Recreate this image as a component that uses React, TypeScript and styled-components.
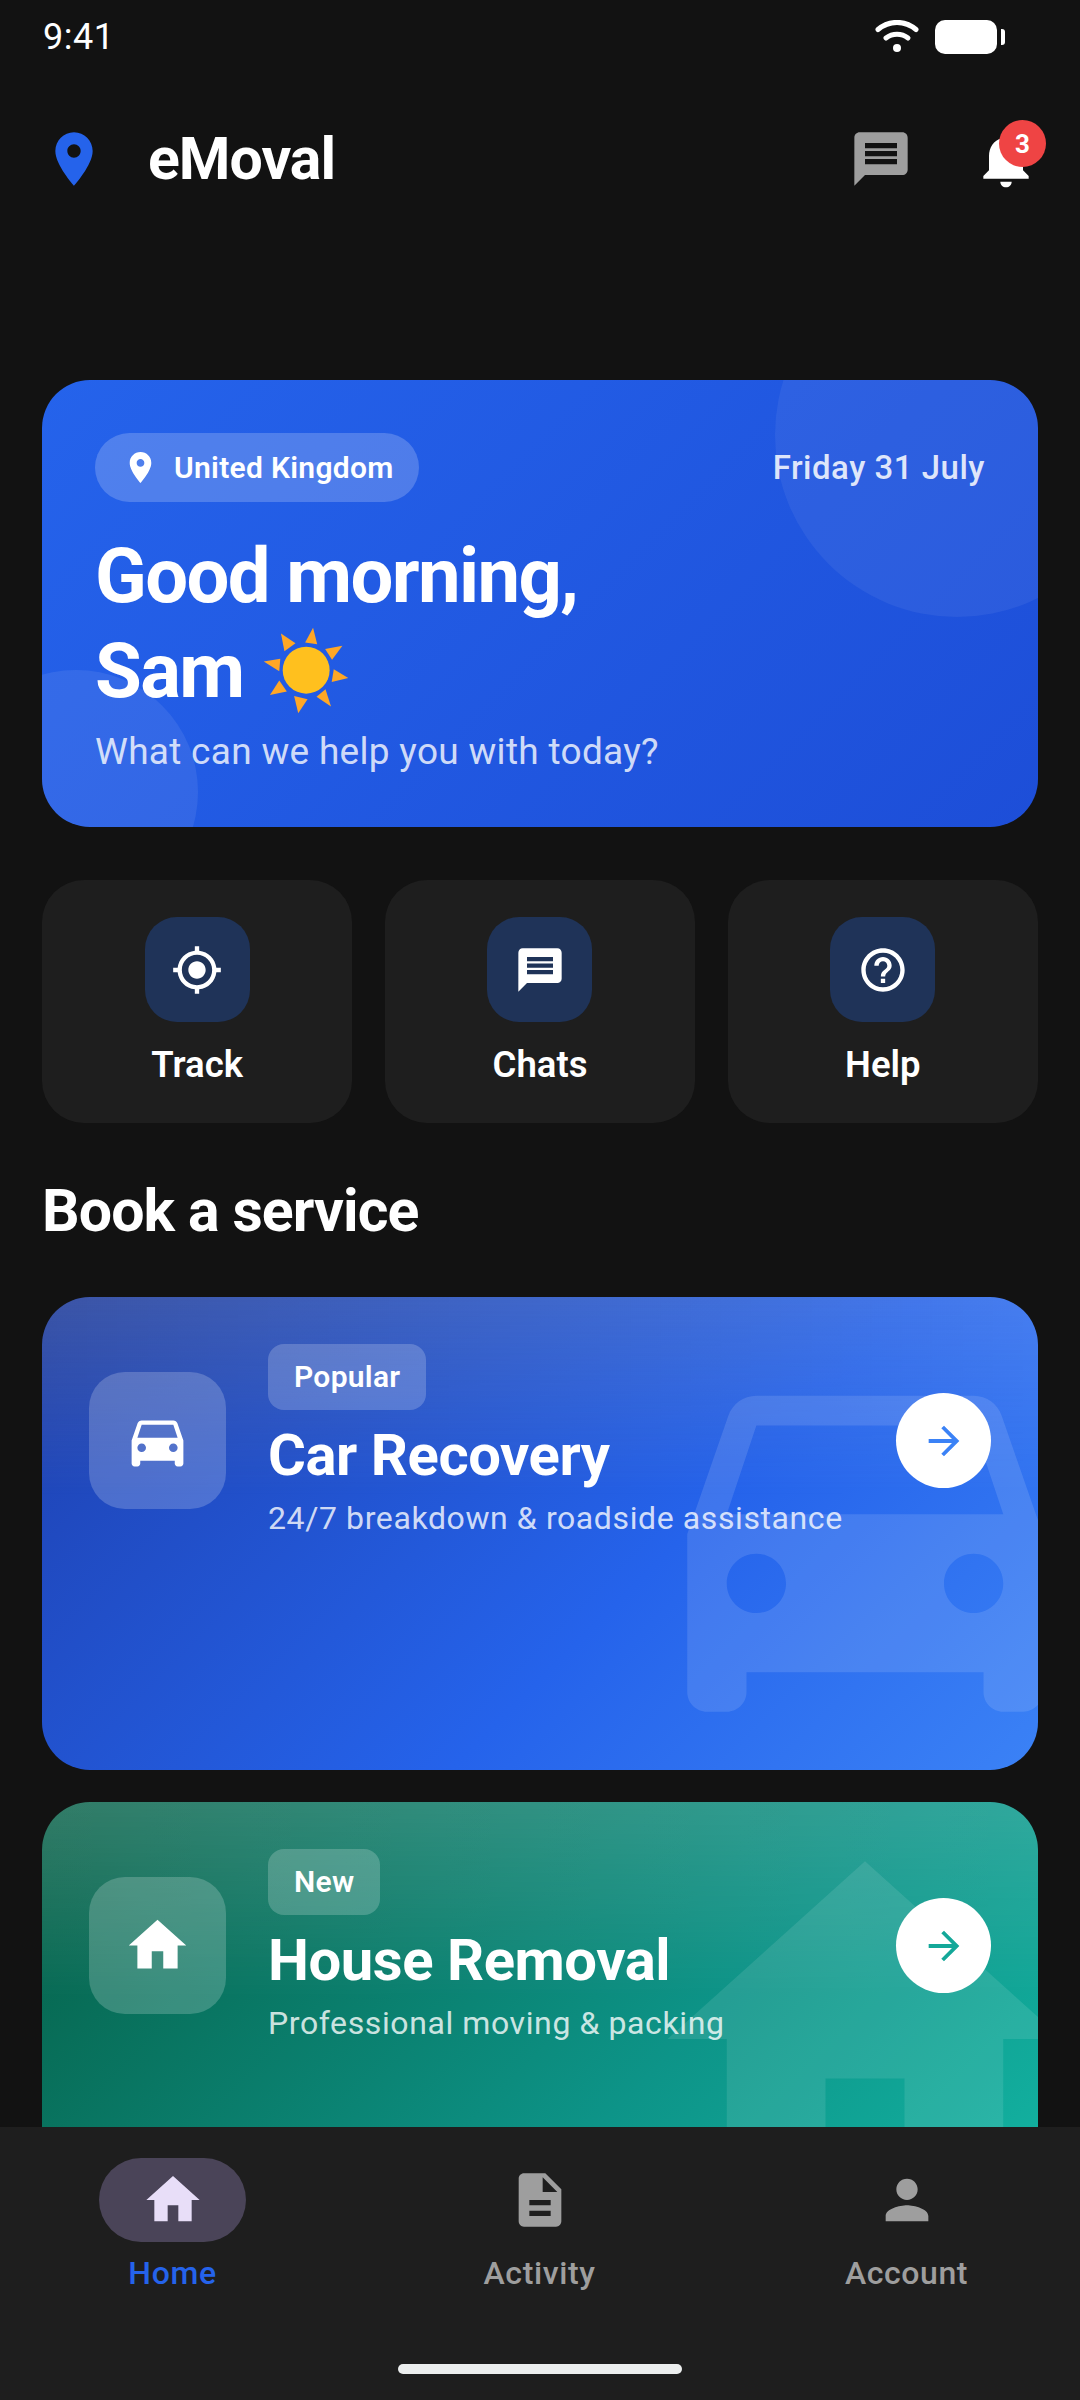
import styled, { createGlobalStyle } from 'styled-components';

const ICONS = {
  pin: 'M12 2C8.13 2 5 5.13 5 9c0 5.25 7 13 7 13s7-7.75 7-13c0-3.87-3.13-7-7-7zm0 9.5c-1.38 0-2.5-1.12-2.5-2.5s1.12-2.5 2.5-2.5 2.5 1.12 2.5 2.5-1.12 2.5-2.5 2.5z',
  message:
    'M20 2H4c-1.1 0-1.99.9-1.99 2L2 22l4-4h14c1.1 0 2-.9 2-2V4c0-1.1-.9-2-2-2zm-2 12H6v-2h12v2zm0-3H6V9h12v2zm0-3H6V6h12v2z',
  bell: 'M12 22c1.1 0 2-.9 2-2h-4c0 1.1.89 2 2 2zm6-6v-5c0-3.07-1.64-5.64-4.5-6.32V4c0-.83-.67-1.5-1.5-1.5s-1.5.67-1.5 1.5v.68C7.63 5.36 6 7.92 6 11v5l-2 2v1h16v-1l-2-2z',
  gps: 'M12 8c-2.21 0-4 1.79-4 4s1.79 4 4 4 4-1.79 4-4-1.79-4-4-4zm8.94 3c-.46-4.17-3.77-7.48-7.94-7.94V1h-2v2.06C6.83 3.52 3.52 6.83 3.06 11H1v2h2.06c.46 4.17 3.77 7.48 7.94 7.94V23h2v-2.06c4.17-.46 7.48-3.77 7.94-7.94H23v-2h-2.06zM12 19c-3.87 0-7-3.13-7-7s3.13-7 7-7 7 3.13 7 7-3.13 7-7 7z',
  help: 'M11 18h2v-2h-2v2zm1-16C6.48 2 2 6.48 2 12s4.48 10 10 10 10-4.48 10-10S17.52 2 12 2zm0 18c-4.41 0-8-3.59-8-8s3.59-8 8-8 8 3.59 8 8-3.59 8-8 8zm0-14c-2.21 0-4 1.79-4 4h2c0-1.1.9-2 2-2s2 .9 2 2c0 2-3 1.75-3 5h2c0-2.25 3-2.5 3-5 0-2.21-1.79-4-4-4z',
  car: 'M18.92 6.01C18.72 5.42 18.16 5 17.5 5h-11c-.66 0-1.21.42-1.42 1.01L3 12v8c0 .55.45 1 1 1h1c.55 0 1-.45 1-1v-1h12v1c0 .55.45 1 1 1h1c.55 0 1-.45 1-1v-8l-2.08-5.99zM6.5 16c-.83 0-1.5-.67-1.5-1.5S5.67 13 6.5 13s1.5.67 1.5 1.5S7.33 16 6.5 16zm11 0c-.83 0-1.5-.67-1.5-1.5s.67-1.5 1.5-1.5 1.5.67 1.5 1.5-.67 1.5-1.5 1.5zM5 11l1.5-4.5h11L19 11H5z',
  home: 'M10 20v-6h4v6h5v-8h3L12 3 2 12h3v8z',
  arrow: 'M12 4l-1.41 1.41L16.17 11H4v2h12.17l-5.58 5.59L12 20l8-8z',
  file: 'M14 2H6c-1.1 0-1.99.9-1.99 2L4 20c0 1.1.89 2 1.99 2H18c1.1 0 2-.9 2-2V8l-6-6zm2 16H8v-2h8v2zm0-4H8v-2h8v2zm-3-5V3.5L18.5 9H13z',
  person:
    'M12 12c2.21 0 4-1.79 4-4s-1.79-4-4-4-4 1.79-4 4 1.79 4 4 4zm0 2c-2.67 0-8 1.34-8 4v2h16v-2c0-2.66-5.33-4-8-4z',
};

type IconName = keyof typeof ICONS;

const SUN_RAYS = [
  '248,90 225,133 260,138',
  '333,142 283,152 303,183',
  '350,236 308,210 302,247',
  '300,318 284,268 258,290',
  '205,338 232,297 193,288',
  '123,285 172,275 150,243',
  '105,188 153,180 150,216',
  '155,107 165,158 197,135',
];

const Icon = ({ name, size, color }: { name: IconName; size: number; color: string }) => (
  <svg width={size} height={size} viewBox="0 0 24 24" fill={color} style={{ display: 'block', flex: 'none' }}>
    <path d={ICONS[name]} />
  </svg>
);

const GlobalStyle = createGlobalStyle`
  html, body {
    margin: 0;
    padding: 0;
    background: #121212;
  }
  * {
    box-sizing: border-box;
  }
`;

const Screen = styled.div`
  width: 1080px;
  height: 2400px;
  display: flex;
  flex-direction: column;
  overflow: hidden;
  background: #121212;
  color: #fff;
  font-family: Roboto, 'Liberation Sans', sans-serif;
`;

const StatusBar = styled.div`
  height: 70px;
  flex: none;
  display: flex;
  align-items: center;
  justify-content: space-between;
  padding: 4px 75px 0 43px;
`;

const Clock = styled.span`
  font-size: 36px;
  line-height: 66px;
  letter-spacing: 0.5px;
`;

const StatusIcons = styled.div`
  display: flex;
  align-items: center;
  gap: 16px;
`;

const Battery = styled.div`
  width: 70px;
  height: 34px;
  position: relative;
  &::before {
    content: '';
    position: absolute;
    left: 0;
    top: 0;
    width: 62px;
    height: 34px;
    border-radius: 10px;
    background: #fff;
  }
  &::after {
    content: '';
    position: absolute;
    right: 0;
    top: 9px;
    width: 4px;
    height: 16px;
    border-radius: 0 3px 3px 0;
    background: #fff;
  }
`;

const Header = styled.header`
  height: 178px;
  flex: none;
  display: flex;
  align-items: center;
  padding: 0 42px;
`;

const Brand = styled.h1`
  margin: 0 0 0 42px;
  font-size: 59px;
  font-weight: 700;
  line-height: 64px;
  letter-spacing: -1px;
  flex: 1;
`;

const HeaderButton = styled.div`
  width: 64px;
  height: 64px;
  position: relative;
  margin-left: 61px;
  display: flex;
  align-items: center;
  justify-content: center;
`;

const Badge = styled.span`
  position: absolute;
  top: -7px;
  right: -8px;
  width: 47px;
  height: 47px;
  border-radius: 50%;
  background: #ef4444;
  display: flex;
  align-items: center;
  justify-content: center;
  font-size: 26px;
  font-weight: 700;
`;

const Content = styled.main`
  flex: 1;
  min-height: 0;
  overflow: hidden;
  padding: 132px 42px 0;
`;

const Hero = styled.section`
  position: relative;
  height: 447px;
  padding: 53px 53px 0;
  border-radius: 48px;
  overflow: hidden;
  background: linear-gradient(135deg, #2563eb, #1d4ed8);
`;

const HeroBlob = styled.div<{ $variant: 'top' | 'bottom' }>`
  position: absolute;
  border-radius: 50%;
  ${p =>
    p.$variant === 'top'
      ? `
    width: 364px;
    height: 364px;
    top: -127px;
    right: -101px;
    background: rgba(255, 255, 255, 0.06);
  `
      : `
    width: 244px;
    height: 244px;
    bottom: -87px;
    left: -88px;
    background: rgba(255, 255, 255, 0.08);
  `}
`;

const HeroTop = styled.div`
  position: relative;
  display: flex;
  align-items: center;
  justify-content: space-between;
  margin-bottom: 27px;
`;

const LocationPill = styled.div`
  height: 69px;
  width: 324px;
  padding-left: 27px;
  display: flex;
  align-items: center;
  gap: 15px;
  border-radius: 35px;
  background: rgba(255, 255, 255, 0.2);
  font-size: 30px;
  font-weight: 600;
  letter-spacing: 0.3px;
`;

const HeroDate = styled.span`
  font-size: 33px;
  font-weight: 500;
  letter-spacing: 0.5px;
  color: rgba(255, 255, 255, 0.85);
`;

const Greeting = styled.h2`
  position: relative;
  margin: 0;
  font-size: 76px;
  font-weight: 700;
  line-height: 95px;
  letter-spacing: -1.6px;
`;

const GreetingLine = styled.div`
  display: flex;
  align-items: center;
  gap: 18px;
`;

const Sun = styled.svg`
  width: 88px;
  height: 88px;
  margin-top: -3px;
`;

const HeroSub = styled.p`
  position: relative;
  margin: 11px 0 0;
  font-size: 37px;
  line-height: 44px;
  letter-spacing: 0.3px;
  color: rgba(255, 255, 255, 0.8);
`;

const QuickRow = styled.div`
  margin-top: 53px;
  display: grid;
  grid-template-columns: repeat(3, 1fr);
  gap: 32.5px;
`;

const QuickCard = styled.div`
  height: 243px;
  padding-top: 37px;
  border-radius: 42px;
  background: #1e1e1e;
  display: flex;
  flex-direction: column;
  align-items: center;
  font-size: 36.5px;
  font-weight: 600;
`;

const QuickIcon = styled.div`
  width: 105px;
  height: 105px;
  margin-bottom: 21px;
  border-radius: 32px;
  background: #1f3358;
  display: flex;
  align-items: center;
  justify-content: center;
`;

const SectionTitle = styled.h3`
  margin: 52px 0 51px;
  font-size: 59px;
  font-weight: 700;
  line-height: 71px;
  letter-spacing: -0.9px;
`;

const THEMES = {
  blue: {
    bg: 'linear-gradient(135deg, #1e40af, #2563eb 60%, #3b82f6)',
    sheen: 'linear-gradient(90deg, rgba(140,140,140,0.27), rgba(255,255,255,0.14))',
    accent: '#3b82f6',
    watermark: 'rgba(255,255,255,0.12)',
  },
  teal: {
    bg: 'linear-gradient(135deg, #065f46, #0d9488 60%, #14b8a6)',
    sheen: 'linear-gradient(90deg, rgba(255,255,255,0.18), rgba(255,255,255,0.14))',
    accent: '#14a899',
    watermark: 'rgba(255,255,255,0.1)',
  },
};

const ServiceCard = styled.article<{ $bg: string; $sheen: string }>`
  position: relative;
  height: 473px;
  margin-bottom: 32px;
  padding: 47px;
  border-radius: 48px;
  overflow: hidden;
  background: ${p => p.$bg};
  &::before {
    content: '';
    position: absolute;
    inset: 0;
    background: ${p => p.$sheen};
    mask-image: linear-gradient(180deg, #000, transparent 42%);
  }
`;

const Watermark = styled.div`
  position: absolute;
  top: 0;
  right: -64px;
`;

const ServiceRow = styled.div`
  position: relative;
  display: flex;
  align-items: center;
`;

const ServiceIcon = styled.div`
  flex: none;
  width: 137px;
  height: 137px;
  margin-right: 42px;
  border-radius: 36px;
  background: rgba(255, 255, 255, 0.2);
  display: flex;
  align-items: center;
  justify-content: center;
`;

const ServiceText = styled.div`
  flex: 1;
  display: flex;
  flex-direction: column;
  align-items: flex-start;
`;

const Tag = styled.span`
  height: 66px;
  padding: 0 26px 1px;
  border-radius: 16px;
  background: rgba(255, 255, 255, 0.2);
  display: flex;
  align-items: center;
  font-size: 30px;
  font-weight: 600;
  letter-spacing: 0.3px;
`;

const ServiceTitle = styled.h4`
  margin: 10px 0 9px;
  font-size: 58px;
  font-weight: 700;
  line-height: 70px;
  letter-spacing: -0.45px;
`;

const ServiceSub = styled.p`
  margin: 0;
  font-size: 32px;
  line-height: 38px;
  letter-spacing: 0.6px;
  color: rgba(255, 255, 255, 0.8);
`;

const ArrowButton = styled.div`
  flex: none;
  width: 95px;
  height: 95px;
  border-radius: 50%;
  background: #fff;
  display: flex;
  align-items: center;
  justify-content: center;
`;

const BottomNav = styled.nav`
  position: relative;
  flex: none;
  height: 273px;
  padding: 31px 0 0 99px;
  background: #1e1e1e;
  display: flex;
  align-items: flex-start;
  gap: 220px;
`;

const NavItem = styled.div<{ $active?: boolean }>`
  width: 147px;
  display: flex;
  flex-direction: column;
  align-items: center;
  font-size: 32px;
  font-weight: 500;
  line-height: 40px;
  letter-spacing: 0.6px;
  white-space: nowrap;
  color: ${p => (p.$active ? '#2563eb' : '#9e9e9e')};
`;

const NavIcon = styled.div<{ $active?: boolean }>`
  width: 147px;
  height: 84px;
  margin-bottom: 11px;
  border-radius: 42px;
  background: ${p => (p.$active ? '#4a4458' : 'transparent')};
  display: flex;
  align-items: center;
  justify-content: center;
`;

const HomeBar = styled.div`
  position: absolute;
  left: 398px;
  bottom: 26px;
  width: 284px;
  height: 10px;
  border-radius: 5px;
  background: #eceeee;
`;

const QUICK: { label: string; icon: IconName }[] = [
  { label: 'Track', icon: 'gps' },
  { label: 'Chats', icon: 'message' },
  { label: 'Help', icon: 'help' },
];

const SERVICES: {
  tag: string;
  title: string;
  sub: string;
  icon: IconName;
  theme: keyof typeof THEMES;
}[] = [
  { tag: 'Popular', title: 'Car Recovery', sub: '24/7 breakdown & roadside assistance', icon: 'car', theme: 'blue' },
  { tag: 'New', title: 'House Removal', sub: 'Professional moving & packing', icon: 'home', theme: 'teal' },
];

const NAV: { label: string; icon: IconName; active?: boolean }[] = [
  { label: 'Home', icon: 'home', active: true },
  { label: 'Activity', icon: 'file' },
  { label: 'Account', icon: 'person' },
];

const App = () => (
  <Screen>
    <GlobalStyle />
    <StatusBar>
      <Clock>9:41</Clock>
      <StatusIcons>
        <svg width="44" height="34" viewBox="0 0 44 34" fill="none" stroke="#fff" strokeLinecap="round" strokeWidth="5">
          <path d="M3 9.5C14 0 30 0 41 9.5" />
          <path d="M11 18c6.5-5 15.5-5 22 0" />
          <circle cx="22" cy="28" r="4" fill="#fff" stroke="none" />
        </svg>
        <Battery />
      </StatusIcons>
    </StatusBar>

    <Header>
      <Icon name="pin" size={64} color="#2563eb" />
      <Brand>eMoval</Brand>
      <HeaderButton>
        <Icon name="message" size={64} color="#9e9e9e" />
      </HeaderButton>
      <HeaderButton>
        <Icon name="bell" size={68} color="#fff" />
        <Badge>3</Badge>
      </HeaderButton>
    </Header>

    <Content>
      <Hero>
        <HeroBlob $variant="top" />
        <HeroBlob $variant="bottom" />
        <HeroTop>
          <LocationPill>
            <Icon name="pin" size={37} color="#fff" />
            United Kingdom
          </LocationPill>
          <HeroDate>Friday 31 July</HeroDate>
        </HeroTop>
        <Greeting>
          Good morning,
          <GreetingLine>
            Sam
            <Sun viewBox="100 85 255 255">
              {SUN_RAYS.map(points => (
                <polygon key={points} points={points} fill="#ffa726" />
              ))}
              <circle cx="228" cy="213" r="68" fill="#ffc01e" />
            </Sun>
          </GreetingLine>
        </Greeting>
        <HeroSub>What can we help you with today?</HeroSub>
      </Hero>

      <QuickRow>
        {QUICK.map(item => (
          <QuickCard key={item.label}>
            <QuickIcon>
              <Icon name={item.icon} size={52} color="#fff" />
            </QuickIcon>
            {item.label}
          </QuickCard>
        ))}
      </QuickRow>

      <SectionTitle>Book a service</SectionTitle>

      {SERVICES.map(service => (
        <ServiceCard
          key={service.title}
          $bg={THEMES[service.theme].bg}
          $sheen={THEMES[service.theme].sheen}
        >
          <Watermark>
            <Icon name={service.icon} size={474} color={THEMES[service.theme].watermark} />
          </Watermark>
          <ServiceRow>
            <ServiceIcon>
              <Icon name={service.icon} size={69} color="#fff" />
            </ServiceIcon>
            <ServiceText>
              <Tag>{service.tag}</Tag>
              <ServiceTitle>{service.title}</ServiceTitle>
              <ServiceSub>{service.sub}</ServiceSub>
            </ServiceText>
            <ArrowButton>
              <Icon name="arrow" size={46} color={THEMES[service.theme].accent} />
            </ArrowButton>
          </ServiceRow>
        </ServiceCard>
      ))}
    </Content>

    <BottomNav>
      {NAV.map(item => (
        <NavItem key={item.label} $active={item.active}>
          <NavIcon $active={item.active}>
            <Icon name={item.icon} size={64} color={item.active ? '#e8def8' : '#9e9e9e'} />
          </NavIcon>
          {item.label}
        </NavItem>
      ))}
      <HomeBar />
    </BottomNav>
  </Screen>
);

export default App;
